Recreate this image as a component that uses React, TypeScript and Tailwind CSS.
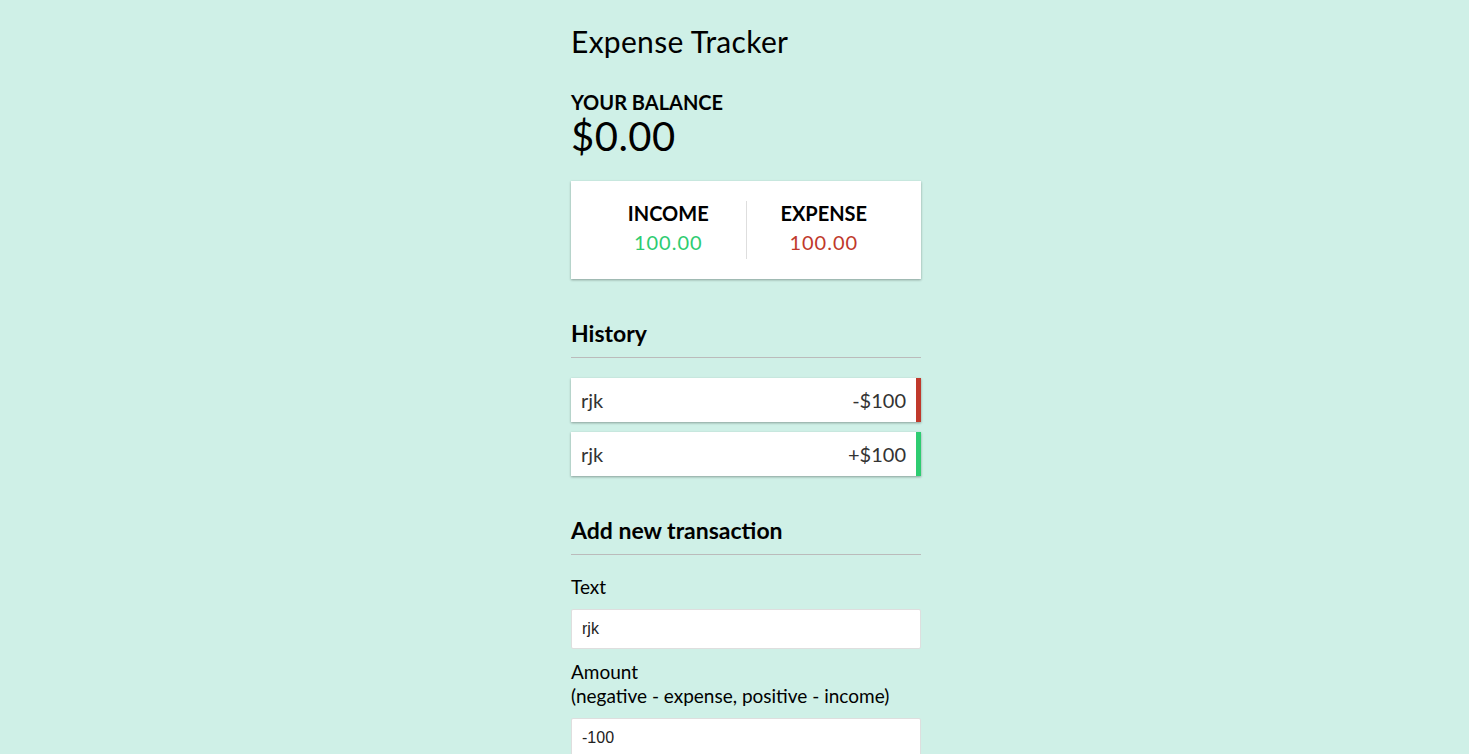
import React from "react";

interface Transaction {
  id: number;
  text: string;
  amount: number;
}

const transactions: Transaction[] = [
  { id: 1, text: "rjk", amount: -100 },
  { id: 2, text: "rjk", amount: 100 },
];

const cardShadow = "shadow-[0_1px_3px_rgba(0,0,0,0.12),0_1px_2px_rgba(0,0,0,0.24)]";

export default function App() {
  return (
    <div className="h-screen overflow-hidden bg-[#cff0e7] font-['Lato',sans-serif] text-black">
      <div className="flex justify-center">
        <div className="w-[350px] ml-[23px] pt-[23px]">
          {/* Header */}
          <h2 className="text-[30px] leading-[36px] font-normal tracking-[0.3px]">Expense Tracker</h2>

          {/* Balance */}
          <h4 className="mt-[31px] text-[20px] leading-[24px] font-bold uppercase">Your Balance</h4>
          <h1 className="text-[40px] leading-[44px] font-normal tracking-[0.5px]">$0.00</h1>

          {/* Income / Expense */}
          <div className={`mt-[23px] flex bg-white p-5 ${cardShadow}`}>
            <div className="flex-1 text-center border-r border-[#dedede]">
              <h4 className="text-[20px] leading-[24px] font-bold uppercase">Income</h4>
              <p className="my-[5px] text-[20px] leading-[24px] tracking-[1px] text-[#2ecc71]">100.00</p>
            </div>
            <div className="flex-1 text-center">
              <h4 className="text-[20px] leading-[24px] font-bold uppercase">Expense</h4>
              <p className="my-[5px] text-[20px] leading-[24px] tracking-[1px] text-[#c0392b]">100.00</p>
            </div>
          </div>

          {/* History */}
          <h3 className="mt-10 pb-[10px] border-b border-[#bbb] text-[23px] leading-[28px] font-bold">History</h3>
          <ul className="mt-5 flex flex-col gap-[10px]">
            {transactions.map((t) => (
              <li
                key={t.id}
                className={`flex justify-between bg-white p-[10px] text-[20px] leading-[24px] text-[#333] ${cardShadow} ${
                  t.amount < 0 ? "border-r-[5px] border-[#c0392b]" : "border-r-[5px] border-[#2ecc71]"
                }`}
              >
                {t.text}
                <span>
                  {t.amount < 0 ? "-" : "+"}${Math.abs(t.amount)}
                </span>
              </li>
            ))}
          </ul>

          {/* Add new transaction */}
          <h3 className="mt-10 pb-[10px] border-b border-[#bbb] text-[23px] leading-[28px] font-bold">Add new transaction</h3>
          <form>
            <div>
              <label className="block mt-5 text-[19px] leading-[24px]">Text</label>
              <input
                type="text"
                defaultValue="rjk"
                className="block mt-[10px] w-full border border-[#dedede] rounded-[2px] bg-white p-[10px] text-[16px] leading-[18px] text-[#222] font-['Liberation_Sans',Arial,sans-serif] outline-none"
              />
            </div>
            <div>
              <label className="block mt-[11px] text-[19px] leading-[24px]">
                Amount <br />
                (negative - expense, positive - income)
              </label>
              <input
                type="number"
                defaultValue={-100}
                className="block mt-[10px] w-full border border-[#dedede] rounded-[2px] bg-white p-[10px] text-[16px] leading-[18px] text-[#222] font-['Liberation_Sans',Arial,sans-serif] outline-none"
              />
            </div>
            <button className="block w-full mt-[10px] mb-[30px] bg-[#9c88ff] text-white text-[16px] p-[10px]">
              Add transaction
            </button>
          </form>
        </div>
      </div>
    </div>
  );
}
